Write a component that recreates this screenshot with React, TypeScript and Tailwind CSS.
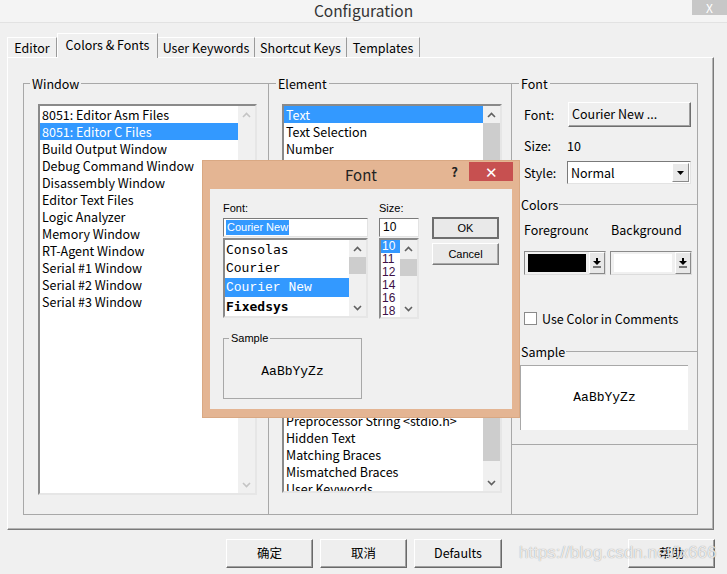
import React from "react";

const windowItems = [
  "8051: Editor Asm Files",
  "8051: Editor C Files",
  "Build Output Window",
  "Debug Command Window",
  "Disassembly Window",
  "Editor Text Files",
  "Logic Analyzer",
  "Memory Window",
  "RT-Agent Window",
  "Serial #1 Window",
  "Serial #2 Window",
  "Serial #3 Window",
];

const elementItems = [
  "Text",
  "Text Selection",
  "Number",
  "Operator",
  "Block Comment",
  "Line Comment",
  "Keyword",
  "String",
  "Identifier",
  "Identifier Active",
  "Preprocessor Keyword",
  "Preprocessor Identifier",
  "Preprocessor Number",
  "Preprocessor Operator",
  "Preprocessor Comment",
  "Preprocessor Line Comment",
  "Preprocessor String",
  "Preprocessor Char",
  "Preprocessor String <stdio.h>",
  "Hidden Text",
  "Matching Braces",
  "Mismatched Braces",
  "User Keywords",
];

const fontItems = [
  { name: "Consolas", cls: "font-['DejaVu_Sans_Mono',monospace]" },
  { name: "Courier", cls: "font-['Liberation_Mono',monospace]" },
  { name: "Courier New", cls: "font-['Liberation_Mono',monospace]" },
  { name: "Fixedsys", cls: "font-['DejaVu_Sans_Mono',monospace] font-bold" },
];

const sizeItems = ["10", "11", "12", "14", "16", "18"];

function Chevron({ up, color }: { up?: boolean; color: string }) {
  return (
    <svg width="9" height="6" viewBox="0 0 9 6">
      <polyline
        points={up ? "1,5 4.5,1.5 8,5" : "1,1 4.5,4.5 8,1"}
        fill="none"
        stroke={color}
        strokeWidth="1.6"
      />
    </svg>
  );
}

function Scrollbar({
  disabled,
  thumbTop = 0,
  thumbH = 0,
}: {
  disabled?: boolean;
  thumbTop?: number;
  thumbH?: number;
}) {
  const c = disabled ? "#c4c4c4" : "#606060";
  return (
    <div className="w-[17px] flex flex-col bg-[#f0f0f0] shrink-0">
      <div className="h-[17px] flex items-center justify-center">
        <Chevron up color={c} />
      </div>
      <div className="flex-1 flex flex-col">
        {thumbH > 0 && (
          <div
            className="w-[17px] bg-[#cdcdcd]"
            style={{ marginTop: thumbTop, height: thumbH }}
          />
        )}
      </div>
      <div className="h-[17px] flex items-center justify-center">
        <Chevron color={c} />
      </div>
    </div>
  );
}

function Tab({
  w,
  active,
  first,
  children,
}: {
  w: string;
  active?: boolean;
  first?: boolean;
  children: React.ReactNode;
}) {
  if (active) {
    return (
      <div
        className={`${w} h-[25px] -mb-px relative z-10 bg-[#f0f0f0] border-t border-l border-white border-r border-r-[#9a9a9a] text-[12.5px] leading-[21px] text-center whitespace-nowrap`}
      >
        {children}
      </div>
    );
  }
  return (
    <div
      className={`${w} h-[20px] border-t border-t-white border-r border-r-[#9a9a9a] ${
        first ? "border-l border-l-white" : ""
      } text-[12.5px] leading-[20px] text-center whitespace-nowrap`}
    >
      {children}
    </div>
  );
}

function ArrowDownBar() {
  return (
    <svg width="8" height="10" viewBox="0 0 8 10">
      <rect x="3" y="0" width="2" height="3" fill="#000" />
      <polygon points="0,3 8,3 4,7" fill="#000" />
      <rect x="0" y="8.5" width="8" height="1" fill="#000" />
    </svg>
  );
}

function ColorPicker({ color }: { color: string }) {
  return (
    <div className="w-[82px] h-[24px] flex items-center border border-t-[#8a8a8a] border-l-[#8a8a8a] border-r-[#dcdcdc] border-b-[#dcdcdc] bg-[#f0f0f0]">
      <div className={`ml-[3px] w-[58px] h-[18px] ${color}`} />
      <div className="ml-[3px] w-[16px] h-[22px] flex items-center justify-center border border-t-white border-l-white border-r-[#8a8a8a] border-b-[#8a8a8a] bg-[#e8e8e8]">
        <ArrowDownBar />
      </div>
    </div>
  );
}

function WinButton({ w, children }: { w: string; children: React.ReactNode }) {
  return (
    <div
      className={`${w} h-[29px] flex items-center justify-center bg-[#eeeeee] border border-t-white border-l-white border-r-[#696969] border-b-[#696969] shadow-[inset_-1px_-1px_0_#a0a0a0] text-[12.5px]`}
    >
      {children}
    </div>
  );
}

export default function App() {
  return (
    <div className="relative w-[727px] h-[574px] overflow-hidden bg-[#f0f0f0] font-['Noto_Sans_CJK_SC','Noto_Sans',sans-serif] text-black">
      {/* Title bar */}
      <div className="flex h-[23px] bg-[#f4f4f4] border-b border-[#e2e2e2]">
        <div className="w-[35px]" />
        <div className="flex-1 text-center text-[15.5px] leading-[20px] text-[#333]">
          Configuration
        </div>
        <div className="w-[35px] h-[15px] bg-[#c7c7c7] text-white text-[12px] leading-[15px] text-center">
          X
        </div>
      </div>

      {/* Tabs */}
      <div className="flex items-end h-[24px] mt-[10px] ml-[7px]">
        <Tab w="w-[50px]" first>
          Editor
        </Tab>
        <Tab w="w-[101px]" active>
          Colors &amp; Fonts
        </Tab>
        <Tab w="w-[97px]">User Keywords</Tab>
        <Tab w="w-[92px]">Shortcut Keys</Tab>
        <Tab w="w-[73px]">Templates</Tab>
      </div>

      {/* Tab page */}
      <div className="ml-[7px] w-[707px] h-[473px] flex pl-[15px] pt-[17px] border border-t-white border-l-white border-r-[#7a7a7a] border-b-[#7a7a7a] shadow-[inset_-1px_-1px_0_#b4b4b4]">
        {/* Window */}
        <fieldset className="w-[246px] h-[440px] border border-[#a8a8a8] min-w-0">
          <legend className="ml-[6px] px-[2px] text-[12.5px] leading-[17px]">Window</legend>
          <div className="pl-[14px] pt-[12px]">
            <div className="flex w-[219px] h-[391px] bg-white border-2 border-t-[#8a8a8a] border-l-[#8a8a8a] border-r-[#e6e6e6] border-b-[#e6e6e6]">
              <div className="flex-1 min-w-0 overflow-hidden">
                {windowItems.map((t, i) => (
                  <div
                    key={t}
                    className={`h-[17px] pl-[2px] text-[12.5px] leading-[17px] whitespace-nowrap ${
                      i === 1 ? "bg-[#3399ff] text-white" : ""
                    }`}
                  >
                    {t}
                  </div>
                ))}
              </div>
              <Scrollbar disabled />
            </div>
          </div>
        </fieldset>

        {/* Element */}
        <fieldset className="w-[243px] h-[440px] border border-l-0 border-[#a8a8a8] min-w-0">
          <legend className="ml-[7px] px-[2px] text-[12.5px] leading-[17px]">Element</legend>
          <div className="pl-[13px] pt-[12px]">
            <div className="flex w-[220px] h-[389px] bg-white border-2 border-t-[#8a8a8a] border-l-[#8a8a8a] border-r-[#e6e6e6] border-b-[#e6e6e6]">
              <div className="flex-1 min-w-0 overflow-hidden">
                {elementItems.map((t, i) => (
                  <div
                    key={t}
                    className={`h-[17px] pl-[2px] text-[12.5px] leading-[17px] whitespace-nowrap ${
                      i === 0 ? "bg-[#3399ff] text-white" : ""
                    }`}
                  >
                    {t}
                  </div>
                ))}
              </div>
              <Scrollbar thumbTop={0} thumbH={338} />
            </div>
          </div>
        </fieldset>

        {/* Font */}
        <fieldset className="w-[186px] h-[440px] border border-l-0 border-[#a8a8a8] min-w-0">
          <legend className="ml-[7px] px-[2px] text-[12.5px] leading-[17px]">Font</legend>
          <div className="flex flex-col text-[12.5px]">
            <div className="flex items-center h-[25px] mt-[10px] pl-[12px]">
              <span className="w-[44px] leading-[17px]">Font:</span>
              <div className="w-[123px] h-[25px] pl-[3px] flex items-center bg-[#efefef] border border-t-white border-l-white border-r-[#6e6e6e] border-b-[#6e6e6e] shadow-[inset_-1px_-1px_0_#a0a0a0] whitespace-nowrap">
                Courier New ...
              </div>
            </div>
            <div className="flex items-center h-[17px] mt-[10px] pl-[12px] leading-[17px]">
              <span className="w-[43px]">Size:</span>
              <span>10</span>
            </div>
            <div className="flex items-center h-[23px] mt-[7px] pl-[12px]">
              <span className="w-[43px] leading-[17px]">Style:</span>
              <div className="w-[124px] h-[23px] flex items-center justify-between bg-white border border-t-[#7a7a7a] border-l-[#7a7a7a] border-r-[#e3e3e3] border-b-[#e3e3e3]">
                <span className="pl-[3px] leading-[17px]">Normal</span>
                <div className="w-[17px] h-[19px] mr-[1px] flex items-center justify-center bg-[#e9e9e9] border border-t-white border-l-white border-r-[#8a8a8a] border-b-[#8a8a8a]">
                  <svg width="7" height="4" viewBox="0 0 7 4">
                    <polygon points="0,0 7,0 3.5,4" fill="#000" />
                  </svg>
                </div>
              </div>
            </div>
            <div className="flex items-center h-[17px] mt-[12px] pl-[9px]">
              <span className="leading-[17px] pr-[1px]">Colors</span>
              <div className="flex-1 h-px bg-[#a8a8a8]" />
            </div>
            <div className="flex h-[17px] mt-[8px] pl-[12px] leading-[17px]">
              <span className="w-[64px] overflow-hidden whitespace-nowrap">Foreground</span>
              <span className="ml-[23px] whitespace-nowrap">Background</span>
            </div>
            <div className="flex mt-[13px] pl-[12px] gap-[4px]">
              <ColorPicker color="bg-black" />
              <ColorPicker color="bg-white" />
            </div>
            <div className="flex items-center h-[15px] mt-[36px] pl-[12px]">
              <div className="w-[13px] h-[13px] bg-white border border-[#8a8a8a]" />
              <span className="ml-[5px] leading-[17px] whitespace-nowrap">Use Color in Comments</span>
            </div>
            <div className="flex items-center h-[17px] mt-[17px] pl-[9px]">
              <span className="leading-[17px] pr-[1px]">Sample</span>
              <div className="flex-1 h-px bg-[#a8a8a8]" />
            </div>
            <div className="ml-[8px] mt-[5px] w-[168px] h-[65px] flex items-center justify-center bg-white border-t border-l border-[#a8a8a8] font-['Liberation_Mono',monospace] text-[13px]">
              AaBbYyZz
            </div>
            <div className="mt-[14px] h-px bg-[#a8a8a8]" />
          </div>
        </fieldset>
      </div>

      {/* Bottom buttons */}
      <div className="flex mt-[9px] pl-[226px] gap-[7px]">
        <WinButton w="w-[87px]">确定</WinButton>
        <WinButton w="w-[87px]">取消</WinButton>
        <WinButton w="w-[88px]">Defaults</WinButton>
        <div className="ml-[119px]">
          <WinButton w="w-[87px]">帮助</WinButton>
        </div>
      </div>

      {/* Watermark */}
      <div className="absolute left-[519px] top-[541px] text-[17px] leading-[24px] font-['Liberation_Sans',sans-serif] text-white/80 [text-shadow:0_0_1px_rgba(0,0,0,0.45)] whitespace-nowrap pointer-events-none">
        https://blog.csdn.net/lx666
      </div>

      {/* Font dialog */}
      <div className="absolute left-[202px] top-[160px] w-[318px] h-[258px] flex flex-col px-[7px] pb-[8px] bg-[#e4b593] border border-[#d9a883]">
        <div className="h-[28px] grid grid-cols-[1fr_auto_1fr] items-center">
          <div />
          <div className="text-[15px] leading-[20px] text-[#222]">Font</div>
          <div className="flex justify-end items-start self-start h-full">
            <span className="mt-[3px] text-[13px] leading-[16px] font-bold text-[#222]">?</span>
            <div className="ml-[11px] mt-[1px] -mr-[1px] w-[44px] h-[19px] flex items-center justify-center bg-[#c75050] text-white text-[15px] leading-[19px]">
              ✕
            </div>
          </div>
        </div>
        <div className="flex-1 bg-[#f0f0f0] pl-[13px] pt-[11px] font-['Liberation_Sans',sans-serif]">
          <div className="flex">
            {/* Font column */}
            <div className="w-[145px] flex flex-col">
              <div className="h-[16px] text-[11px] leading-[16px]">Font:</div>
              <div className="mt-[2px] h-[19px] flex items-center bg-white border border-t-[#7a7a7a] border-l-[#7a7a7a] border-r-[#e3e3e3] border-b-[#e3e3e3] pl-[2px]">
                <span className="bg-[#3399ff] text-white text-[11px] leading-[15px] px-[1px]">Courier New</span>
              </div>
              <div className="mt-[1px] h-[80px] flex bg-white border-2 border-t-[#8a8a8a] border-l-[#8a8a8a] border-r-[#e6e6e6] border-b-[#e6e6e6]">
                <div className="flex-1 min-w-0 overflow-hidden">
                  {fontItems.map((f, i) => (
                    <div
                      key={f.name}
                      className={`h-[19px] pl-[1px] text-[13px] leading-[19px] whitespace-nowrap ${f.cls} ${
                        i === 2 ? "bg-[#3399ff] text-white" : ""
                      }`}
                    >
                      {f.name}
                    </div>
                  ))}
                </div>
                <Scrollbar thumbTop={0} thumbH={17} />
              </div>
            </div>
            {/* Size column */}
            <div className="ml-[11px] w-[40px] flex flex-col">
              <div className="h-[16px] text-[11px] leading-[16px]">Size:</div>
              <div className="mt-[2px] h-[19px] flex items-center bg-white border border-t-[#7a7a7a] border-l-[#7a7a7a] border-r-[#e3e3e3] border-b-[#e3e3e3] pl-[3px] text-[12px] leading-[15px]">
                10
              </div>
              <div className="mt-[1px] h-[81px] flex bg-white border-2 border-t-[#8a8a8a] border-l-[#8a8a8a] border-r-[#e6e6e6] border-b-[#e6e6e6]">
                <div className="flex-1 min-w-0 overflow-hidden">
                  {sizeItems.map((s, i) => (
                    <div
                      key={s}
                      className={`h-[13px] pl-[1px] text-[12px] leading-[13px] ${
                        i === 0 ? "bg-[#3399ff] text-white" : "text-[#3d0f45]"
                      }`}
                    >
                      {s}
                    </div>
                  ))}
                </div>
                <Scrollbar thumbTop={2} thumbH={17} />
              </div>
            </div>
            {/* Buttons */}
            <div className="ml-[13px] mt-[17px] flex flex-col gap-[4px]">
              <div className="w-[67px] h-[22px] flex items-center justify-center bg-[#e9e9e9] border-2 border-[#6e6e6e] text-[11px]">
                OK
              </div>
              <div className="w-[67px] h-[22px] flex items-center justify-center bg-[#e9e9e9] border border-t-white border-l-white border-r-[#7a7a7a] border-b-[#7a7a7a] shadow-[inset_-1px_-1px_0_#a8a8a8] text-[11px]">
                Cancel
              </div>
            </div>
          </div>
          {/* Sample */}
          <fieldset className="mt-[12px] w-[139px] h-[68px] border border-[#a8a8a8] min-w-0">
            <legend className="ml-[5px] px-[2px] text-[11px] leading-[15px]">Sample</legend>
            <div className="w-full h-[52px] flex items-center justify-center font-['Liberation_Mono',monospace] text-[13px]">
              AaBbYyZz
            </div>
          </fieldset>
        </div>
      </div>
    </div>
  );
}
